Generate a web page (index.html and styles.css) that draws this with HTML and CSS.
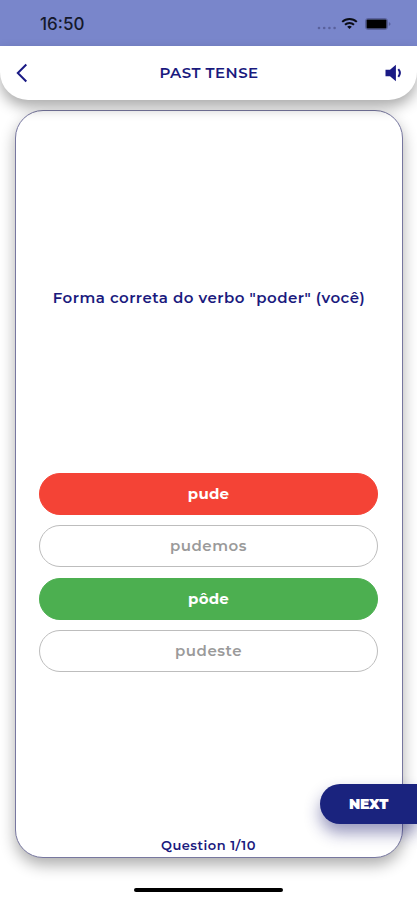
FILE: index.html
```html
<!DOCTYPE html>
<html lang="pt">
<head>
    <meta charset="UTF-8">
    <meta name="viewport" content="width=device-width, initial-scale=1.0">
    <title>Past Tense</title>
    <link rel="stylesheet" href="styles.css">
</head>
<body>
    <div class="status-bar">
        <span class="time">16:50</span>
        <div class="status-icons">
            <svg class="signal" width="20" height="4" viewBox="0 0 20 4">
                <circle cx="2" cy="2" r="1.3"/>
                <circle cx="7.2" cy="2" r="1.3"/>
                <circle cx="12.4" cy="2" r="1.3"/>
                <circle cx="17.6" cy="2" r="1.3"/>
            </svg>
            <svg class="wifi" width="17" height="13" viewBox="0 0 17 13">
                <path d="M1.2 4.9a10.5 10.5 0 0 1 14.6 0M4 7.8a6.5 6.5 0 0 1 9 0" fill="none" stroke="#0b0d16" stroke-width="2"/>
                <path d="M8.5 12 6.2 9.8a3.3 3.3 0 0 1 4.6 0z" fill="#0b0d16"/>
            </svg>
            <svg class="battery" width="26" height="12" viewBox="0 0 26 12">
                <rect x=".5" y=".5" width="22" height="11" rx="2.5" fill="none" stroke="#59619c"/>
                <rect x="1.5" y="1.5" width="20" height="9" rx="1" fill="#000"/>
                <path d="M23.8 4v4q1.8-.8 1.8-2t-1.8-2z" fill="#59619c"/>
            </svg>
        </div>
    </div>
    <header class="header">
        <button class="icon-btn" aria-label="Back">
            <svg width="14" height="20" viewBox="0 0 14 20">
                <path d="M12.3 1.5 3.8 10l8.5 8.5" fill="none" stroke="#1a1a85" stroke-width="2"/>
            </svg>
        </button>
        <h1>PAST TENSE</h1>
        <button class="icon-btn" aria-label="Sound">
            <svg width="18" height="18" viewBox="0 0 18 18">
                <path d="M.5 5.8h4.5L10.9.7v16.6L5 12.2H.5z" fill="#1a1a85"/>
                <path d="M13.3 5.2q3.2 3.8 0 7.6" fill="none" stroke="#1a1a85" stroke-width="2"/>
            </svg>
        </button>
    </header>
    <main class="card">
        <p class="question">Forma correta do verbo "poder" (você)</p>
        <div class="options">
            <button class="option wrong">pude</button>
            <button class="option">pudemos</button>
            <button class="option correct">pôde</button>
            <button class="option">pudeste</button>
        </div>
        <p class="counter">Question 1/10</p>
    </main>
    <button class="next">NEXT</button>
    <div class="home-bar"></div>
</body>
</html>
```
FILE: styles.css
```css
* {
    box-sizing: border-box;
}
body {
    font-family: Montserrat, Inter, sans-serif;
    background: #fff;
    color: #1a1a7e;
    margin: 0;
    height: 900px;
    display: flex;
    flex-direction: column;
    overflow: hidden;
}
button {
    font-family: inherit;
    border: none;
    padding: 0;
    cursor: pointer;
}
.status-bar {
    flex: none;
    height: 46px;
    padding: 1px 26px 0 40px;
    background: #7986cb;
    display: flex;
    align-items: center;
    justify-content: space-between;
}
.time {
    font-family: Inter, sans-serif;
    font-size: 17px;
    font-weight: 500;
    line-height: 20px;
    padding-top: 1px;
    color: #15192b;
}
.status-icons {
    display: flex;
    align-items: center;
}
.signal {
    fill: #59619c;
    margin: 9px 4px 0 0;
}
.wifi {
    margin-right: 7px;
}
.header {
    position: relative;
    z-index: 1;
    flex: none;
    height: 54px;
    padding: 0 14px;
    display: flex;
    align-items: center;
    justify-content: space-between;
    background: #fff;
    border-radius: 0 0 28px 28px;
    box-shadow: 0 7px 14px rgba(0, 0, 0, 0.33);
}
.header h1 {
    margin: 0;
    padding: 0 0 2px 5px;
    font-size: 15px;
    font-weight: 600;
    letter-spacing: 0.45px;
}
.icon-btn {
    background: none;
    display: flex;
}
.card {
    flex: none;
    height: 748px;
    margin: 10px 14px 0 15px;
    padding: 0 24px 0 23px;
    display: flex;
    flex-direction: column;
    background: #fff;
    border: 1px solid #77779f;
    border-radius: 28px;
    box-shadow: 0 7px 15px rgba(0, 0, 0, 0.32);
}
.question {
    margin: 177px -21px 0 -20px;
    font-size: 15px;
    font-weight: 600;
    line-height: 20px;
    letter-spacing: 0.48px;
    text-align: center;
    white-space: nowrap;
}
.options {
    margin-top: 164.5px;
    display: flex;
    flex-direction: column;
    gap: 10.5px;
}
.option {
    height: 42px;
    padding-bottom: 1px;
    border: 1px solid #bdbdbd;
    border-radius: 21px;
    background: #fff;
    color: #9a9a9a;
    font-size: 15px;
    font-weight: 600;
    letter-spacing: 0.55px;
}
.option.wrong {
    background: #f44336;
    border-color: #f44336;
    color: #fff;
    font-weight: 700;
    letter-spacing: 0.2px;
}
.option.correct {
    background: #4caf50;
    border-color: #4caf50;
    color: #fff;
    font-weight: 700;
    letter-spacing: 0.2px;
}
.counter {
    margin: auto 0 3px;
    font-size: 13px;
    font-weight: 600;
    line-height: 18px;
    letter-spacing: 0.5px;
    text-align: center;
}
.next {
    position: absolute;
    z-index: 2;
    right: 0;
    top: 784px;
    width: 97px;
    height: 40px;
    background: #1a237e;
    color: #fff;
    font-size: 14px;
    font-weight: 900;
    letter-spacing: -0.2px;
    border-radius: 20px 0 0 20px;
    box-shadow: 0 9px 16px rgba(26, 26, 110, 0.45);
}
.home-bar {
    width: 149px;
    height: 4px;
    margin: 30px auto 0;
    border-radius: 2px;
    background: #000;
}
```
